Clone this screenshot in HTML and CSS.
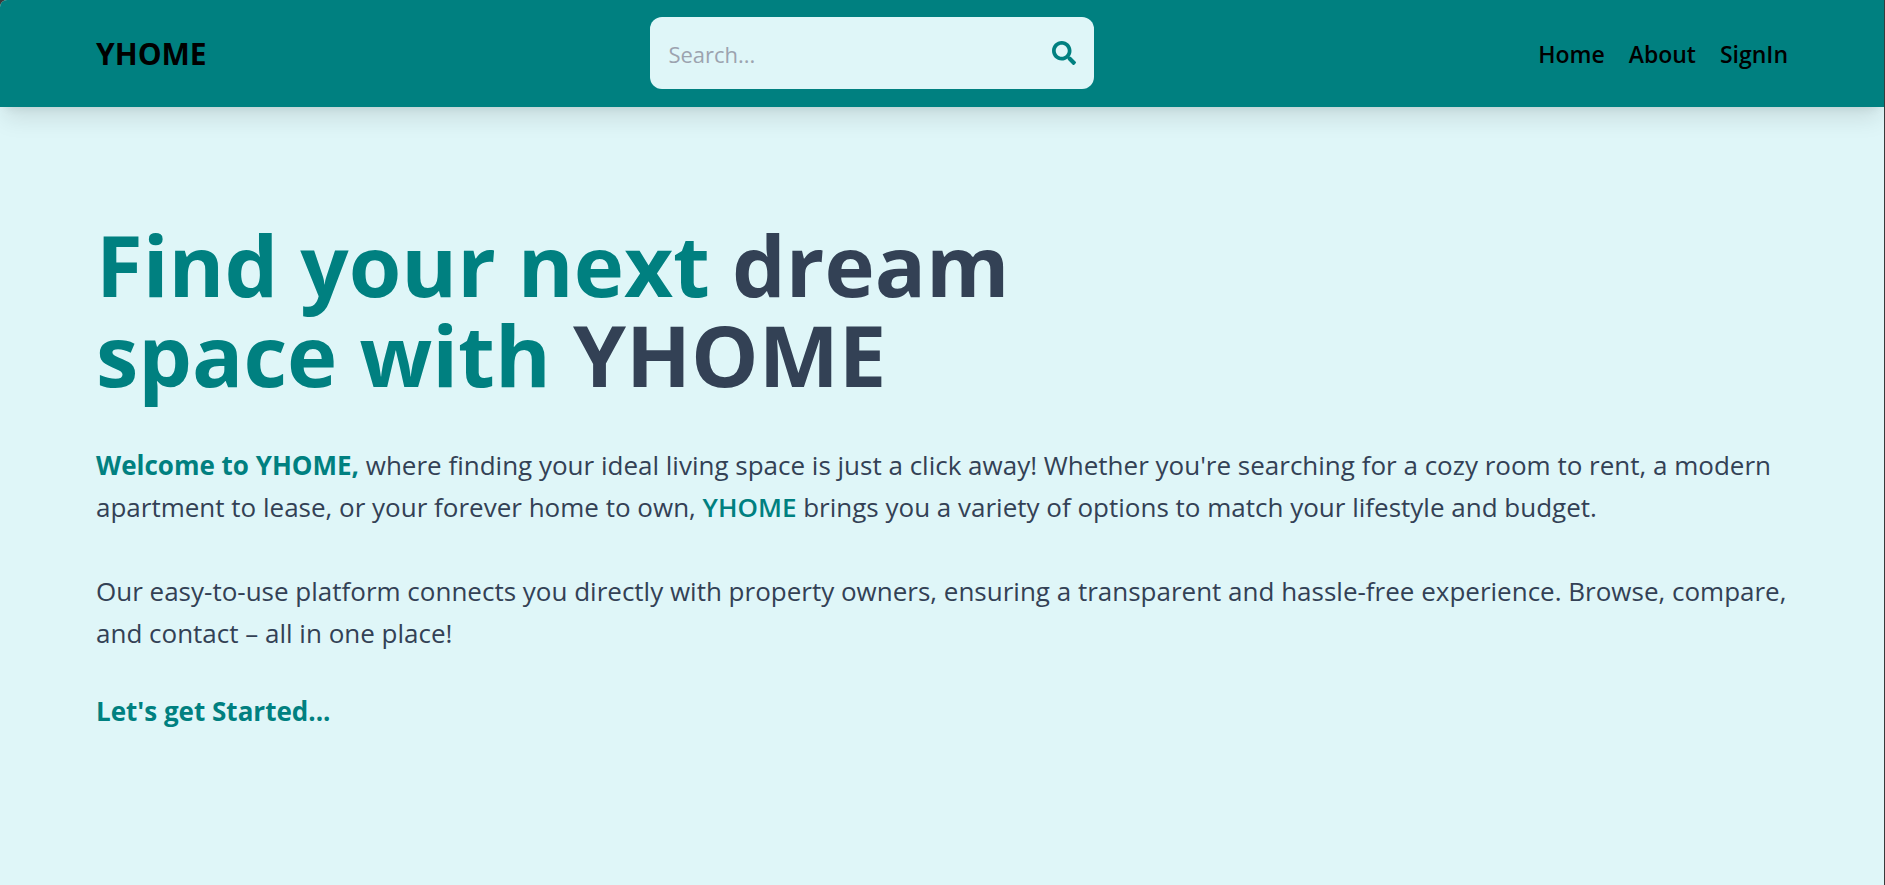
FILE: index.html
```html
<!DOCTYPE html>
<html lang="en">
<head>
<meta charset="utf-8">
<meta name="viewport" content="width=device-width, initial-scale=1">
<title>YHOME</title>
<link rel="stylesheet" href="styles.css">
</head>
<body>
<div class="page">
  <header class="header">
    <a class="logo" href="#">YHOME</a>
    <form class="search" role="search">
      <input class="search-input" type="text" placeholder="Search..." aria-label="Search">
      <button class="search-button" type="button" aria-label="Submit search">
        <svg class="search-icon" viewBox="0 0 512 512" aria-hidden="true"><path fill="currentColor" d="M505 442.700L405.300 343c-4.500-4.500-10.600-7-17-7H372c27.600-35.300 44-79.700 44-128C416 93.100 322.900 0 208 0S0 93.100 0 208s93.100 208 208 208c48.300 0 92.700-16.400 128-44v16.300c0 6.400 2.500 12.500 7 17l99.700 99.700c9.400 9.400 24.600 9.400 33.900 0l28.300-28.300c9.400-9.400 9.400-24.600.1-34zM208 336c-70.700 0-128-57.200-128-128 0-70.700 57.200-128 128-128 70.700 0 128 57.200 128 128 0 70.700-57.200 128-128 128z"/></svg>
      </button>
    </form>
    <nav class="nav">
      <a href="#">Home</a>
      <a href="#">About</a>
      <a href="#">SignIn</a>
    </nav>
  </header>
  <main class="hero">
    <h1 class="title">Find your next <span class="title-dark">dream</span><br>space with <span class="title-dark">YHOME</span></h1>
    <div class="intro">
      <p><strong class="welcome">Welcome to YHOME,</strong> where finding your ideal living space is just a click away! Whether you're searching for a cozy room to rent, a modern apartment to lease, or your forever home to own, <span class="brand">YHOME</span> brings you a variety of options to match your lifestyle and budget.</p>
      <p>Our easy-to-use platform connects you directly with property owners, ensuring a transparent and hassle-free experience. Browse, compare, and contact – all in one place!</p>
    </div>
    <a class="start" href="#">Let's get Started...</a>
  </main>
</div>
</body>
</html>
```
FILE: styles.css
```css
* { box-sizing: border-box; }
html { background: #3a3a3a; }
body {
  margin: 0;
  font-family: "Open Sans", "Noto Sans", sans-serif;
  color: #334155;
}
a { color: inherit; text-decoration: none; }
.page {
  min-height: 100vh;
  margin-right: 1px;
  background: #dff6f8;
  border-top-left-radius: 7px;
  overflow: hidden;
}
.header {
  display: flex;
  justify-content: space-between;
  align-items: center;
  padding: 17px 96px 18px;
  background: #008080;
  color: #000;
  box-shadow: 0 15px 22px -4px rgb(0 0 0 / 0.1), 0 6px 9px -6px rgb(0 0 0 / 0.1);
}
.logo { padding-top: 2px; font-size: 30px; font-weight: 700; line-height: 42px; }
.search {
  display: flex;
  align-items: center;
  width: 444px;
  padding: 18px;
  border-radius: 12px;
  background: #dff6f8;
}
.search-input {
  flex: 1;
  min-width: 0;
  height: 36px;
  padding: 2px 0 0;
  border: 0;
  outline: 0;
  background: transparent;
  font: inherit;
  font-size: 22px;
  color: #334155;
}
.search-input::placeholder { color: #9ca3af; opacity: 1; }
.search-button {
  display: flex;
  padding: 0;
  border: 0;
  background: transparent;
  color: #008080;
}
.search-icon { width: 24px; height: 24px; }
.nav { display: flex; gap: 24px; padding-top: 2px; font-size: 23px; font-weight: 600; line-height: 36px; }
.hero { padding: 112px 96px; }
.title { margin: 0; font-size: 85px; font-weight: 700; line-height: 90px; color: #008080; }
.title-dark { color: #334155; }
.intro {
  display: grid;
  gap: 42px;
  margin: 45px 0 36px;
  font-size: 26px;
  line-height: 42px;
}
.intro p { margin: 0; }
.welcome { font-weight: 700; color: #008080; }
.brand { font-weight: 600; color: #008080; }
.start { font-size: 26px; font-weight: 700; line-height: 42px; color: #008080; }
```
